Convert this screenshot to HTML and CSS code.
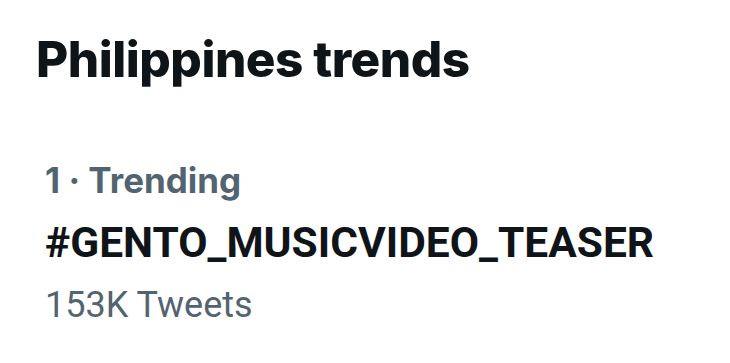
FILE: index.html
```html
<!DOCTYPE html>
<html>
<head>
<meta charset="utf-8">
<link rel="stylesheet" href="styles.css">
</head>
<body>
<div class="page">
  <h1 class="title">Philippines trends</h1>
  <div class="trend">
    <div class="meta">1 · Trending</div>
    <div class="tag">#GENTO_MUSICVIDEO_TEASER</div>
    <div class="count">153K Tweets</div>
  </div>
</div>
</body>
</html>
```
FILE: styles.css
```css
html, body {
  margin: 0;
  padding: 0;
  background: #ffffff;
}
.page {
  padding: 26px 0 0 36px;
}
.title {
  margin: 0;
  font-family: Inter, "Noto Sans", sans-serif;
  font-weight: 800;
  font-size: 49.5px;
  line-height: 66px;
  color: #0f1419;
  letter-spacing: -0.5px;
}
.trend {
  margin-top: 68px;
  padding-left: 9px;
}
.meta {
  font-family: Inter, "Noto Sans", sans-serif;
  font-weight: 700;
  font-size: 35px;
  line-height: 40px;
  color: #536471;
}
.tag {
  margin-top: 15px;
  font-family: Roboto, sans-serif;
  font-weight: 700;
  font-size: 42.5px;
  line-height: 56px;
  color: #0f1419;
}
.count {
  margin-top: 6px;
  font-family: Roboto, sans-serif;
  font-weight: 400;
  font-size: 36px;
  line-height: 56px;
  color: #536471;
}
```
